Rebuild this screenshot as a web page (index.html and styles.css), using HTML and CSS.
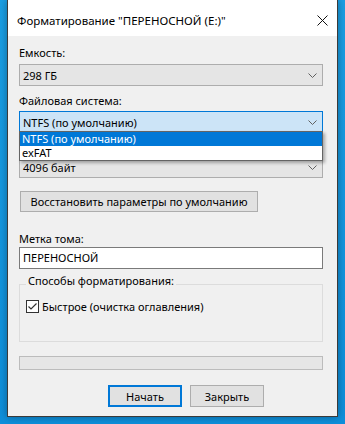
FILE: index.html
```html
<!DOCTYPE html>
<html lang="ru">
<head>
  <meta charset="UTF-8">
  <title>Форматирование</title>
  <link rel="stylesheet" href="styles.css">
</head>
<body>
  <div class="window">
    <div class="titlebar">
      <span class="title">Форматирование "ПЕРЕНОСНОЙ (E:)"</span>
      <svg class="close" width="11" height="11" viewBox="0 0 11 11">
        <path d="M0.5 0.5 L10.5 10.5 M10.5 0.5 L0.5 10.5" stroke="#111" stroke-width="1" fill="none"/>
      </svg>
    </div>

    <div class="content">
      <div class="label label-first">Емкость:</div>
      <div class="combo">
        <span>298 ГБ</span>
        <svg class="chevron" width="9" height="5" viewBox="0 0 9 5"><path d="M0.5 0.5 L4.5 4.5 L8.5 0.5" stroke="#606060" fill="none"/></svg>
      </div>

      <div class="label">Файловая система:</div>
      <div class="combo combo-open">
        <span>NTFS (по умолчанию)</span>
        <svg class="chevron" width="9" height="5" viewBox="0 0 9 5"><path d="M0.5 0.5 L4.5 4.5 L8.5 0.5" stroke="#606060" fill="none"/></svg>
        <ul class="droplist">
          <li class="selected">NTFS (по умолчанию)</li>
          <li>exFAT</li>
        </ul>
      </div>

      <!-- label of the allocation size combo sits under the open list -->
      <div class="label label-hidden"></div>
      <div class="combo">
        <span>4096 байт</span>
        <svg class="chevron" width="9" height="5" viewBox="0 0 9 5"><path d="M0.5 0.5 L4.5 4.5 L8.5 0.5" stroke="#606060" fill="none"/></svg>
      </div>

      <button class="btn btn-restore">Восстановить параметры по умолчанию</button>

      <div class="label label-volume">Метка тома:</div>
      <div class="textbox">ПЕРЕНОСНОЙ</div>

      <div class="group">
        <div class="legend">Способы форматирования:</div>
        <div class="check">
          <svg class="checkbox" width="13" height="13" viewBox="0 0 13 13">
            <rect x="0.5" y="0.5" width="12" height="12" fill="#fff" stroke="#333"/>
            <path d="M2.5 6.5 L5 9 L10.5 3.5" stroke="#333" stroke-width="1.2" fill="none"/>
          </svg>
          <span>Быстрое (очистка оглавления)</span>
        </div>
      </div>

      <div class="progress"></div>

      <div class="actions">
        <button class="btn btn-default">Начать</button>
        <button class="btn">Закрыть</button>
      </div>
    </div>
  </div>
</body>
</html>
```

FILE: styles.css
```css
html, body {
  margin: 0;
  padding: 0;
}
body {
  width: 345px;
  height: 424px;
  overflow: hidden;
  background: linear-gradient(180deg, #1b9fe4 0%, #0e8fdb 100%);
  font-family: "Segoe UI", "Noto Sans", sans-serif;
  font-size: 11px;
  color: #000;
}
.window {
  margin-left: 7px;
  width: 329px;
  height: 416px;
  border: 1px solid #3a3a3a;
  border-top: none;
  background: #f0f0f0;
  box-shadow: 0 0 8px rgba(0, 0, 0, 0.35);
  position: relative;
}
.titlebar {
  height: 36px;
  background: #fff;
  display: flex;
  align-items: center;
  justify-content: space-between;
  padding: 4px 9px 0 9px;
  box-sizing: border-box;
}
.title {
  font-size: 11.5px;
  line-height: 15px;
}
.close {
  display: block;
  margin-top: 1px;
}
.content {
  padding: 0 14px 0 11px;
}
.label {
  line-height: 15px;
  height: 15px;
  margin-top: 7px;
  margin-bottom: 3px;
}
.label-first {
  margin-top: 9px;
  margin-bottom: 4px;
}
.label-hidden {
  margin-top: 5px;
}
.combo {
  height: 22px;
  box-sizing: border-box;
  border: 1px solid #adadad;
  background: #e5e5e5;
  display: flex;
  align-items: center;
  justify-content: space-between;
  padding: 0 5px 0 3px;
  line-height: 15px;
  position: relative;
}
.combo-open {
  border-color: #0078d7;
  background: #cce4f7;
  z-index: 2;
}
.chevron {
  display: block;
}
.droplist {
  position: absolute;
  left: -1px;
  right: -1px;
  top: 19px;
  margin: 0;
  padding: 0;
  list-style: none;
  background: #fff;
  border: 1px solid #646464;
  box-shadow: 2px 2px 3px rgba(0, 0, 0, 0.3);
}
.droplist li {
  height: 14px;
  line-height: 14px;
  padding-left: 2px;
}
.droplist .selected {
  background: #0078d7;
  color: #fff;
}
.btn {
  font-family: inherit;
  font-size: 11px;
  color: #000;
  background: #e1e1e1;
  border: 1px solid #adadad;
  border-radius: 0;
  height: 21px;
  padding: 0;
  margin: 0;
  line-height: 15px;
  display: block;
}
.btn-restore {
  margin-top: 13px;
  margin-left: 1px;
  width: 238px;
}
.label-volume {
  margin-top: 19px;
  margin-bottom: 1px;
}
.textbox {
  height: 22px;
  box-sizing: border-box;
  border: 1px solid #7a7a7a;
  background: #fff;
  padding: 0 3px;
  line-height: 20px;
}
.group {
  margin-top: 15px;
  height: 58px;
  box-sizing: border-box;
  border: 1px solid #dcdcdc;
}
.legend {
  width: max-content;
  height: 15px;
  margin-top: -12px;
  margin-left: 6px;
  padding: 0 2px;
  line-height: 15px;
  background: #f0f0f0;
}
.check {
  display: flex;
  align-items: center;
  gap: 3px;
  margin-top: 12px;
  margin-left: 6px;
  height: 13px;
}
.checkbox {
  display: block;
}
.progress {
  margin-top: 14px;
  height: 14px;
  box-sizing: border-box;
  border: 1px solid #bcbcbc;
  background: #e6e6e6;
}
.actions {
  display: flex;
  gap: 8px;
  margin-top: 15px;
  padding-left: 89px;
}
.actions .btn {
  width: 74px;
  height: 22px;
}
.btn-default {
  border: 2px solid #0078d7;
}
```
